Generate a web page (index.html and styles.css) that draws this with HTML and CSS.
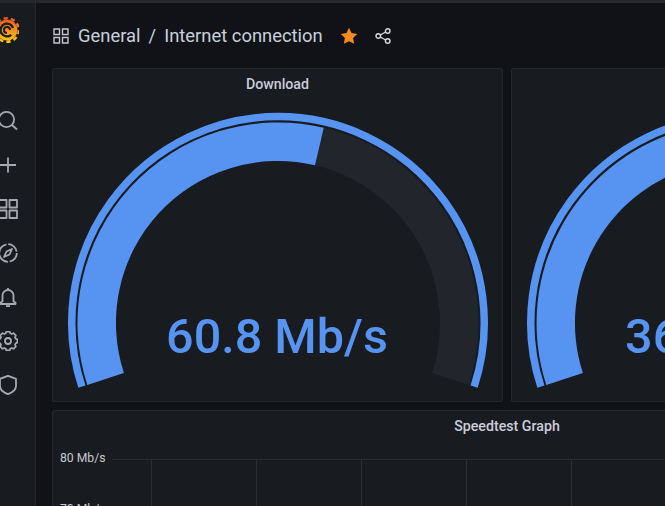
FILE: index.html
```html
<!DOCTYPE html>
<html lang="en">
<head>
<meta charset="utf-8">
<title>Internet connection</title>
<link rel="stylesheet" href="styles.css">
</head>
<body>
<div class="strip"></div>
<div class="app">
  <nav class="sidebar">
    <svg class="logo" viewBox="0 0 24 28" width="24" height="28">
      <defs><linearGradient id="lg" gradientUnits="userSpaceOnUse" x1="0" y1="0" x2="0" y2="28"><stop offset="0" stop-color="#ee4a22"/><stop offset=".55" stop-color="#f7901e"/><stop offset="1" stop-color="#fbd40a"/></linearGradient></defs>
      <circle cx="12" cy="15" r="10.500" fill="url(#lg)"/>
      <circle cx="12" cy="15" r="11.800" fill="none" stroke="url(#lg)" stroke-width="2.400" stroke-dasharray="4.200 3.200"/>
      <path fill="none" stroke="#181b1f" stroke-width="2.300" d="M18 12.800a6.400 6.400 0 1 0-1.800 7"/>
      <path fill="none" stroke="#181b1f" stroke-width="2" d="M12 18a3 3 0 1 1 3-3"/>
    </svg>
    <svg class="nav-icon" viewBox="0 0 20 20"><circle cx="8.500" cy="8.500" r="7.600"/><path d="M14 14l5 4.500"/></svg>
    <svg class="nav-icon" viewBox="0 0 20 20"><path d="M10 2.500v15M2 10h16"/></svg>
    <svg class="nav-icon" viewBox="0 0 20 20"><path d="M1 1h7.500v7.500H1zM11.500 1H19v7.500h-7.500zM1 11.500h7.500V19H1zM11.500 11.500H19V19h-7.500z"/></svg>
    <svg class="nav-icon" viewBox="0 0 20 20"><circle cx="10" cy="10" r="8.800" stroke-dasharray="12 1.800"/><path d="M14 6l-2.500 5.500L6 14l2.500-5.500z"/></svg>
    <svg class="nav-icon" viewBox="0 0 20 20"><path d="M4.500 14.500V8.500a5.500 5.500 0 0 1 11 0v6l2 1v1.500h-15v-1.500zM10 1v2M8 19.200h4"/></svg>
    <svg class="nav-icon" viewBox="0 0 20 20">
      <circle cx="10" cy="10" r="3"/>
      <path d="M7.200 3.200L8.400.6h3.200l1.200 2.600"/>
      <path d="M7.200 3.200L8.400.6h3.200l1.200 2.600" transform="rotate(45 10 10)"/>
      <path d="M7.200 3.200L8.400.6h3.200l1.200 2.600" transform="rotate(90 10 10)"/>
      <path d="M7.200 3.200L8.400.6h3.200l1.200 2.600" transform="rotate(135 10 10)"/>
      <path d="M7.200 3.200L8.400.6h3.200l1.200 2.600" transform="rotate(180 10 10)"/>
      <path d="M7.200 3.200L8.400.6h3.200l1.200 2.600" transform="rotate(225 10 10)"/>
      <path d="M7.200 3.200L8.400.6h3.200l1.200 2.600" transform="rotate(270 10 10)"/>
      <path d="M7.200 3.200L8.400.6h3.200l1.200 2.600" transform="rotate(315 10 10)"/>
    </svg>
    <svg class="nav-icon" viewBox="0 0 20 20"><path d="M10 .8l8 3v7c0 4-4 7-8 8.400-4-1.400-8-4.400-8-8.400v-7z"/></svg>
  </nav>
  <main class="content">
    <header class="toolbar">
      <svg class="crumb-icon" viewBox="0 0 16 16"><path d="M1 1h5.500v5.500H1zM9.500 1H15v5.500H9.500zM1 9.500h5.500V15H1zM9.500 9.500H15V15H9.500z"/></svg>
      <span class="crumb">General</span>
      <span class="crumb sep">/</span>
      <span class="crumb">Internet connection</span>
      <svg class="star" viewBox="0 0 18 18"><path d="M9 .8l2.500 5.300 5.700.8-4.100 4 1 5.800L9 14.200l-5.100 2.500 1-5.800-4.100-4 5.700-.8z"/></svg>
      <svg class="share" viewBox="0 0 16 16"><circle cx="3.300" cy="8" r="2.300"/><circle cx="12.700" cy="3" r="2.300"/><circle cx="12.700" cy="13" r="2.300"/><path d="M5.300 7l5.400-3M5.300 9l5.400 3"/></svg>
    </header>
    <section class="grid">
      <article class="panel">
        <h2 class="panel-title">Download</h2>
        <div class="gauge">
          <svg viewBox="0 0 451 302" width="451" height="302">
            <path class="track-fill" d="M263 65.300A162 162 0 0 1 380.100 273.100L416.700 285A200.500 200.500 0 0 0 271.800 27.800Z"/>
            <path class="value-fill" d="M71.900 273.100A162 162 0 0 1 263 65.300L271.800 27.800A200.500 200.500 0 0 0 35.300 285Z"/>
            <path class="threshold" d="M29.900 286.700A206.250 206.250 0 1 1 422.100 286.700"/>
            <text class="gauge-value" x="225" y="253">60.8 Mb/s</text>
          </svg>
        </div>
      </article>
      <article class="panel">
        <h2 class="panel-title">Upload</h2>
        <div class="gauge">
          <svg viewBox="0 0 451 302" width="451" height="302">
            <path class="track-fill" d="M190 65A162 162 0 0 1 380.100 273.100L416.700 285A200.500 200.500 0 0 0 181 27.800Z"/>
            <path class="value-fill" d="M71.900 273.100A162 162 0 0 1 190 65L181 27.800A200.500 200.500 0 0 0 35.300 285Z"/>
            <path class="threshold" d="M29.900 286.700A206.250 206.250 0 1 1 422.100 286.700"/>
            <text class="gauge-value" x="225" y="253">36.3 Mb/s</text>
          </svg>
        </div>
      </article>
      <article class="panel wide">
        <h2 class="panel-title">Speedtest Graph</h2>
        <svg class="graph" viewBox="0 0 908 70" width="908" height="70">
          <text class="axis" x="7" y="21">80 Mb/s</text>
          <text class="axis" x="7" y="72">70 Mb/s</text>
          <path class="gridline" d="M59 18.500H908M98.500 18.500V70M203.500 18.500V70M308.500 18.500V70M413.500 18.500V70M518.500 18.500V70M623.500 18.500V70"/>
        </svg>
      </article>
    </section>
  </main>
</div>
</body>
</html>
```
FILE: styles.css
```css
* { box-sizing: border-box; }
html, body { margin: 0; height: 506px; overflow: hidden; }
body { background: #111217; font-family: Roboto, "Liberation Sans", sans-serif; color: #ccccdc; }
.strip { height: 3px; background: #26272b; }
.app { display: flex; height: 503px; }
.sidebar { width: 36px; flex: none; background: #181b1f; border-right: 1px solid #25272c; display: flex; flex-direction: column; align-items: flex-start; padding-top: 12px; overflow: hidden; }
.logo { margin-left: -5px; margin-bottom: 68px; flex: none; }
.nav-icon { width: 20px; height: 20px; margin-left: -2px; margin-bottom: 24px; flex: none; fill: none; stroke: #a6a9b0; stroke-width: 1.800; stroke-linejoin: round; }
.content { flex: 1; min-width: 0; padding: 0 0 0 16px; overflow: hidden; }
.toolbar { height: 65px; display: flex; align-items: center; padding-top: 1px; }
.crumb-icon { width: 16px; height: 16px; margin: 0 9px 0 1px; fill: none; stroke: #c3c5cc; stroke-width: 1.400; }
.crumb { font-size: 18.400px; color: #c7d0d9; white-space: nowrap; padding-bottom: 2px; }
.sep { margin: 0 8px; }
.star { width: 18px; height: 18px; margin-left: 17px; fill: #f58a1f; }
.share { width: 16px; height: 16px; margin-left: 17px; fill: none; stroke: #d6d8de; stroke-width: 1.400; }
.grid { display: grid; grid-template-columns: 451px 451px; grid-auto-rows: min-content; gap: 8px; width: 910px; }
.panel { background: #181b1f; border: 1px solid #25272c; border-radius: 2px; height: 334px; overflow: hidden; }
.panel.wide { grid-column: 1 / 3; height: 120px; }
.panel-title { margin: 0; height: 31px; line-height: 30px; font-size: 14.200px; font-weight: 500; color: #ccccdc; text-align: center; }
.gauge { line-height: 0; margin-left: -1px; }
.track-fill { fill: #22252b; }
.value-fill { fill: #5794f2; }
.threshold { fill: none; stroke: #5794f2; stroke-width: 7.500; }
.gauge-value { font-size: 48.500px; font-weight: 500; fill: #5794f2; text-anchor: middle; font-family: Roboto, "Liberation Sans", sans-serif; }
.graph { display: block; margin-top: -1px; }
.axis { font-size: 12.200px; fill: #c7c9d1; font-family: Roboto, "Liberation Sans", sans-serif; }
.gridline { fill: none; stroke: #2b2e33; stroke-width: 1; }
```
